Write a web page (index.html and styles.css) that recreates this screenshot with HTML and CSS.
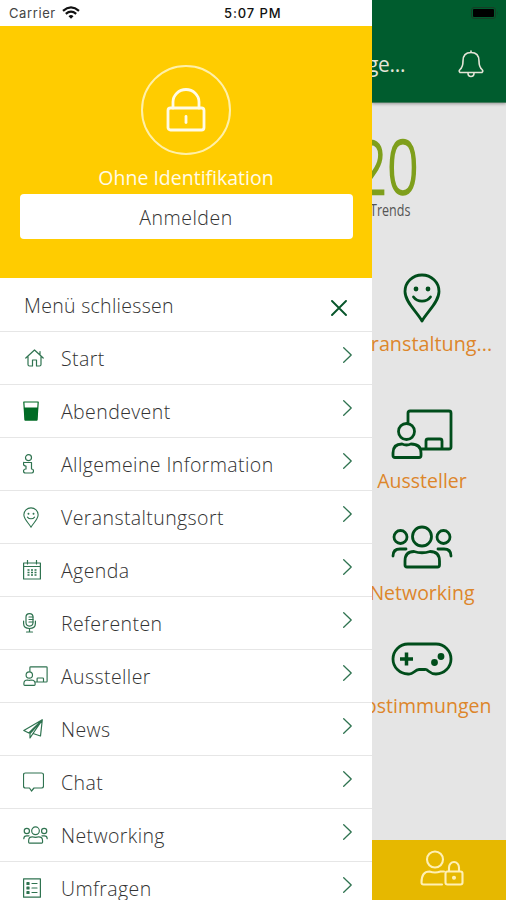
FILE: index.html
```html
<!DOCTYPE html>
<html lang="de">
<head>
<meta charset="utf-8">
<title>Menü</title>
<link rel="stylesheet" href="styles.css">
</head>
<body>
<svg class="defs" aria-hidden="true">
  <symbol id="pin" viewBox="0 0 38 50"><path d="M19 48C14 39 2 29 2 18.500a17 16.500 0 0 1 34 0C36 29 24 39 19 48Z"/><path d="M10.500 24c4 5.500 13 5.500 17 0"/><circle class="solid" cx="13" cy="16" r="1"/><circle class="solid" cx="25" cy="16" r="1"/></symbol>
  <symbol id="board" viewBox="0 0 62 50"><path d="M17 13V4q0-2 2-2h39q2 0 2 2v34q0 2-2 2H31M35 40v-8q0-2 2-2h12q2 0 2 2v8"/><circle cx="15.500" cy="22.500" r="8"/><path d="M2 46.500V44q0-9 9-9 4.500 2 9 0 10 0 10 9v2.500q0 2-2 2H4q-2 0-2-2Z"/></symbol>
  <symbol id="people" viewBox="0 0 62 44"><circle cx="31" cy="11.500" r="9.500"/><circle cx="9.500" cy="12" r="6.500"/><circle cx="52.500" cy="12" r="6.500"/><path d="M2 31q0-7 7-7h6M60 31q0-7-7-7h-6M14 40V36q0-9.500 9-9.500 8 2.500 16 0 9.500 0 9.500 9.500v4q0 2-2 2H16q-2 0-2-2Z"/></symbol>
</svg>
<div class="screen">
  <aside class="drawer">
    <div class="status">
      <span class="carrier">Carrier</span>
      <svg class="wifi" viewBox="0 0 18 13"><path d="M1 4.800Q9-2 17 4.800M3.800 7.800Q9 3.500 14.200 7.800"/><path class="solid" d="M6.500 10.200Q9 8 11.500 10.200L9 12.800Z"/></svg>
      <span class="clock">5:07 PM</span>
    </div>
    <section class="login">
      <div class="avatar"><svg viewBox="0 0 40 44"><rect x="2" y="20" width="36" height="22" rx="2.500"/><path d="M7 20V14a13 12.500 0 0 1 26 0v6"/><path class="key" d="M20 28.500v6"/></svg></div>
      <p class="ident">Ohne Identifikation</p>
      <button class="signin">Anmelden</button>
    </section>
    <nav class="menu">
      <a class="row close"><span class="label">Menü schliessen</span><svg class="x" viewBox="0 0 16 16"><path d="M1 1l14 14M15 1L1 15"/></svg></a>
      <a class="row"><span class="icon"><svg class="home" width="19" height="18" viewBox="0 0 19 18"><path d="M.8 9L9.500 1l8.700 8M3 7.500V15.500q0 1.500 1.500 1.500h3v-6h4v6h3q1.500 0 1.500-1.500V7.500M15 2.500v3"/></svg></span><span class="label">Start</span><svg class="chev" viewBox="0 0 9 16"><path d="M.7.700L8.200 8 .7 15.300"/></svg></a>
      <a class="row"><span class="icon"><svg class="glass" width="16" height="20" viewBox="0 0 16 20"><path d="M.8 1h14.400L14 19H2Z"/><path class="solid" d="M1.500 7h13L13.500 19h-11Z"/></svg></span><span class="label">Abendevent</span><svg class="chev" viewBox="0 0 9 16"><path d="M.7.700L8.200 8 .7 15.300"/></svg></a>
      <a class="row"><span class="icon"><svg width="11" height="20" viewBox="0 0 11 20"><circle cx="5.500" cy="3.700" r="3"/><path d="M1 8.500h7.500V15q2 0 2 2t-2 2H2.500q-2 0-2-2t2.500-2v-3Q.5 12 .5 10T1 8.500Z"/></svg></span><span class="label">Allgemeine Information</span><svg class="chev" viewBox="0 0 9 16"><path d="M.7.700L8.200 8 .7 15.300"/></svg></a>
      <a class="row"><span class="icon"><svg class="mini3" width="16" height="21"><use href="#pin"/></svg></span><span class="label">Veranstaltungsort</span><svg class="chev" viewBox="0 0 9 16"><path d="M.7.700L8.200 8 .7 15.300"/></svg></a>
      <a class="row"><span class="icon"><svg width="18" height="20" viewBox="0 0 18 20"><path d="M.6 3h16.800v16H.6ZM.6 6.500h16.800M4.500.5V4M13.500.5V4"/><path class="dots" d="M4.500 10h9.500M4.500 12.500h9.500M4.500 15h9.500"/></svg></span><span class="label">Agenda</span><svg class="chev" viewBox="0 0 9 16"><path d="M.7.700L8.200 8 .7 15.300"/></svg></a>
      <a class="row"><span class="icon"><svg width="13" height="20" viewBox="0 0 13 20"><rect x="3" y=".6" width="7" height="12.500" rx="3.500"/><path d="M.6 8v2.500q0 5 5.900 5t5.900-5V8M6.500 15.500V19M3.500 19h6M6 4h4M6 6.500h4M6 9h4"/></svg></span><span class="label">Referenten</span><svg class="chev" viewBox="0 0 9 16"><path d="M.7.700L8.200 8 .7 15.300"/></svg></a>
      <a class="row"><span class="icon"><svg class="mini" width="25" height="20"><use href="#board"/></svg></span><span class="label">Aussteller</span><svg class="chev" viewBox="0 0 9 16"><path d="M.7.700L8.200 8 .7 15.300"/></svg></a>
      <a class="row"><span class="icon"><svg width="20" height="20" viewBox="0 0 20 20"><path d="M19.300.8L.8 11.500l5 2.500ZM19.300.8L17.500 17 10 14.500ZM19.300.8L7 14.500V19l3-4.500"/></svg></span><span class="label">News</span><svg class="chev" viewBox="0 0 9 16"><path d="M.7.700L8.200 8 .7 15.300"/></svg></a>
      <a class="row"><span class="icon"><svg width="21" height="20" viewBox="0 0 21 20"><path d="M2.500 1h16q2 0 2 2v11q0 2-2 2H11l-2.500 3L6.500 16h-4q-2 0-2-2V3q0-2 2-2Z"/></svg></span><span class="label">Chat</span><svg class="chev" viewBox="0 0 9 16"><path d="M.7.700L8.200 8 .7 15.300"/></svg></a>
      <a class="row"><span class="icon"><svg class="mini" width="25" height="18"><use href="#people"/></svg></span><span class="label">Networking</span><svg class="chev" viewBox="0 0 9 16"><path d="M.7.700L8.200 8 .7 15.300"/></svg></a>
      <a class="row"><span class="icon"><svg width="18" height="20" viewBox="0 0 18 20"><rect x=".6" y=".8" width="16.800" height="18.400"/><path d="M9 5.500h5M9 10h5M9 14.500h5"/><path class="solid" d="M4 4.500h2v2H4ZM4 9h2v2H4ZM4 13.500h2v2H4Z"/></svg></span><span class="label">Umfragen</span><svg class="chev" viewBox="0 0 9 16"><path d="M.7.700L8.200 8 .7 15.300"/></svg></a>
    </nav>
  </aside>
  <main class="page">
    <header class="bar">
      <svg class="battery" viewBox="0 0 28 12"><rect x=".5" y=".5" width="24" height="11" rx="2.500"/><rect class="charge" x="2" y="2" width="21" height="8" rx="1"/><path class="cap" d="M26 4q1.500 2 0 4Z"/></svg>
      <div class="heading"><span class="title">ge...</span>
      <svg class="bell" viewBox="0 0 26 28"><path d="M13 1v1.500M2 22.500q-1.500-1.500 0-3Q5 17 5 11q0-8.500 8-8.500T21 11q0 6 3 8.500 1.500 1.500 0 3ZM10 23q0 3.500 3 3.500t3-3.500"/></svg></div>
    </header>
    <div class="brand"><div class="year">20</div><div class="motto">Trends</div></div>
    <div class="tiles">
      <div class="tile venue"><svg width="38" height="50"><use href="#pin"/></svg><span>Veranstaltung...</span></div>
      <div class="tile expo"><svg width="62" height="50"><use href="#board"/></svg><span>Aussteller</span></div>
      <div class="tile net"><svg width="62" height="44"><use href="#people"/></svg><span>Networking</span></div>
      <div class="tile votes"><svg width="62" height="34" viewBox="0 0 62 34"><path d="M17 2h28a15 15 0 0 1 0 30Q41 32 38 29.500T34 27.500H28Q26 27.500 23 30T17 32a15 15 0 0 1 0-30Z"/><path class="pad" d="M9 17h13M15.500 10.500v13"/><circle class="solid" cx="43.500" cy="20.500" r="2"/><circle class="solid" cx="50" cy="14.500" r="2"/></svg><span>Abstimmungen</span></div>
    </div>
    <footer class="tab"><svg viewBox="0 0 44 36"><circle cx="15" cy="9.500" r="8"/><path d="M22 34.500H3.500q-2 0-2-2 0-11 8-11 5.500 2 11 0H24"/><rect x="25.500" y="21.500" width="17" height="13" rx="2"/><path d="M29 21v-3.500a5 5.500 0 0 1 10 0V21"/><circle class="solid" cx="34" cy="27.800" r="1"/></svg></footer>
  </main>
</div>
</body>
</html>
```
FILE: styles.css
```css
* { box-sizing: border-box; }
body { margin: 0; font-family: "Open Sans", "Noto Sans", sans-serif; }
p { margin: 0; }
svg { display: block; flex: none; fill: none; stroke: currentColor; stroke-linecap: round; stroke-linejoin: round; }
.solid { fill: currentColor; }
.defs { position: absolute; width: 0; height: 0; }
.screen { display: flex; width: 506px; height: 900px; overflow: hidden; background: #e5e5e5; }

.drawer { display: flex; flex-direction: column; flex: none; width: 372px; height: 900px; background: #fff; overflow: hidden; }
.status { display: flex; align-items: center; flex: none; height: 26px; padding-left: 9px; font: 13px/26px Inter, "Liberation Sans", sans-serif; color: #111; }
.carrier { width: 46px; letter-spacing: .6px; color: #444; }
.wifi { width: 18px; height: 13px; margin: -2px 0 0 7px; stroke-width: 2.200; stroke-linecap: butt; }
.wifi .solid { stroke: none; }
.clock { margin-left: 144px; font-weight: 500; letter-spacing: .9px; }

.login { display: flex; flex-direction: column; align-items: center; flex: none; height: 252px; padding-top: 39px; background: #fc0; color: #fffbe8; }
.avatar { display: flex; align-items: center; justify-content: center; flex: none; width: 90px; height: 90px; border: 2px solid #fff0a8; border-radius: 50%; }
.avatar svg { width: 40px; height: 44px; stroke-width: 2.800; }
.ident { margin-top: 9px; font-size: 19.5px; line-height: 28px; }
.signin { flex: none; width: 333px; height: 45px; margin-top: 2px; border: 0; border-radius: 4px; padding: 2px 0 0; background: #fff; color: #333; font: 340 19.5px "Open Sans", sans-serif; letter-spacing: .5px; }

.menu { display: flex; flex-direction: column; }
.row { display: flex; align-items: center; flex: none; height: 53px; padding: 0 20px 0 23px; border-bottom: 1px solid #e6e6e6; color: #2f7350; }
.row.close { height: 54px; padding: 0 25px 0 24px; color: #08562b; }
.icon { width: 38px; flex: none; }
.icon svg { stroke-width: 1.200; }
.icon .glass { color: #006b25; }
.icon .home { margin-left: 2px; }
.icon .mini { stroke-width: 2.900; }
.icon .mini3 { stroke-width: 2.600; }
.icon .dots { stroke-dasharray: 2 1.500; stroke-width: 1.500; stroke-linecap: butt; }
.label { flex: 1; color: #333; font-size: 19.5px; font-weight: 340; line-height: 28px; letter-spacing: .4px; padding-top: 2px; white-space: nowrap; }
.close .label { padding-top: 3px; letter-spacing: .3px; }
.x { width: 16px; height: 16px; margin-top: 6px; stroke-width: 1.900; }
.chev { width: 9px; height: 16px; margin-top: -6px; stroke-width: 1.300; }

.page { display: flex; flex-direction: column; flex: none; width: 134px; height: 900px; overflow: hidden; }
.bar { flex: none; height: 103px; background: #005c2e; border-bottom: 1px solid #467a5d; box-shadow: 0 1px 3px #0005; color: #e5e5d8; }
.battery { width: 28px; height: 12px; margin: 7px 0 0 99px; stroke: #173e27; }
.battery .charge { fill: #000; stroke: none; }
.battery .cap { fill: #173e27; stroke: none; }
.heading { display: flex; align-items: center; justify-content: space-between; margin-top: 31px; padding-right: 22px; height: 28px; }
.title { margin-left: -5px; font-size: 21px; font-weight: 500; line-height: 28px; letter-spacing: -.3px; }
.bell { width: 26px; height: 28px; stroke-width: 1.600; }
.brand { flex: none; height: 170px; padding-top: 31px; }
.year { width: 90px; height: 66px; margin-left: -16px; color: #7f9f1c; font: 300 73px/64px "Open Sans", sans-serif; -webkit-text-stroke: 2.300px #7f9f1c; transform: scaleX(.75); transform-origin: left; }
.motto { width: 90px; margin-left: -2px; color: #555; font: 400 15.500px/20px "Open Sans", sans-serif; transform: scaleX(.81); transform-origin: left; }
.tiles { flex: none; height: 567px; width: 168px; margin-left: -34px; }
.tile { display: flex; flex-direction: column; align-items: center; color: #004d1b; }
.tile svg { stroke-width: 2.800; }
.tile .pad { stroke-width: 3.500; stroke-linecap: butt; }
.tile span { margin-top: 8px; color: #dd862b; font-size: 19.5px; line-height: 28px; white-space: nowrap; }
.tile.venue span { margin: 7px 4px 0 0; font-size: 19.8px; }
.tile.net span { margin-top: 10px; }
.tile.votes span { margin-top: 16px; }
.venue { height: 136px; }
.expo { height: 116px; }
.net { height: 117px; }
.tab { display: flex; justify-content: center; flex: none; height: 60px; padding: 10px 0 0 5px; background: #e6b800; color: #fff0b4; }
.tab svg { width: 44px; height: 36px; stroke-width: 2.100; }
```
